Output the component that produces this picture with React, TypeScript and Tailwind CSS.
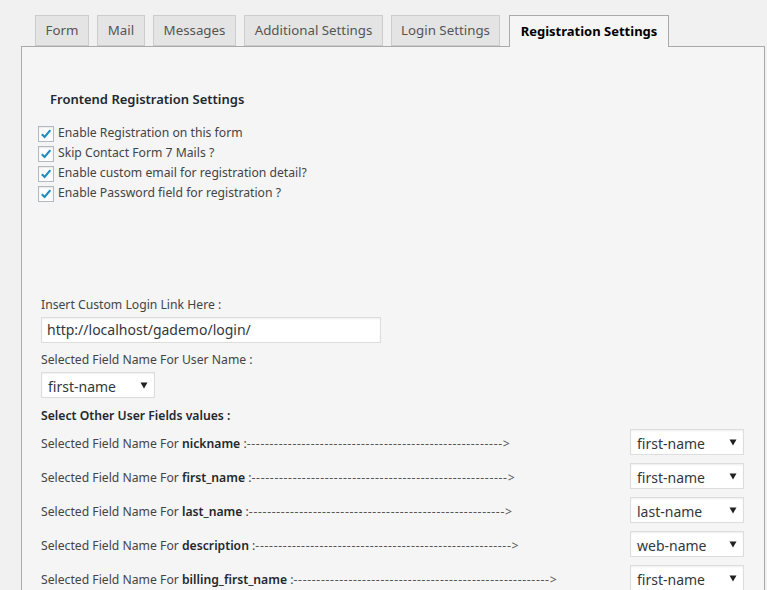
import React from 'react'

const tabs = [
  { label: 'Form', w: 'w-[54px]' },
  { label: 'Mail', w: 'w-[48px]' },
  { label: 'Messages', w: 'w-[83px]' },
  { label: 'Additional Settings', w: 'w-[139px]' },
  { label: 'Login Settings', w: 'w-[109px]' },
]

const checks = [
  'Enable Registration on this form',
  'Skip Contact Form 7 Mails ?',
  'Enable custom email for registration detail?',
  'Enable Password field for registration ?',
]

const rows = [
  { field: 'nickname', value: 'first-name' },
  { field: 'first_name', value: 'first-name' },
  { field: 'last_name', value: 'last-name' },
  { field: 'description', value: 'web-name' },
  { field: 'billing_first_name', value: 'first-name' },
]

const font = { fontFamily: '"Noto Sans", "Open Sans", sans-serif' }
const dashes = '-'.repeat(56)

function Check() {
  return (
    <span className="flex h-4 w-4 shrink-0 items-center justify-center border border-[#b4b9be] bg-white shadow-[inset_0_1px_2px_rgba(0,0,0,0.1)]">
      <svg viewBox="0 0 16 16" className="h-4 w-4">
        <path d="M3.2 8.2 L6.4 11.3 L13 3.6" fill="none" stroke="#1e8cbe" strokeWidth="2.4" />
      </svg>
    </span>
  )
}

function Select({ value }: { value: string }) {
  return (
    <div className="relative h-[26px] w-[114px] border border-[#ddd] bg-white shadow-[inset_0_1px_2px_rgba(0,0,0,0.07)]">
      <span className="absolute left-[6px] top-[3px] text-[14px] text-[#32373c]">{value}</span>
      <svg viewBox="0 0 8 8" className="absolute right-[6px] top-[8px] h-[8px] w-[8px]">
        <path d="M0.5 1.5 L7.5 1.5 L4 7.5 Z" fill="#222" />
      </svg>
    </div>
  )
}

export default function App() {
  return (
    <div className="min-h-[590px] w-[767px] overflow-hidden bg-[#f1f1f1] text-[#444]" style={font}>
      {/* Tabs */}
      <div className="flex gap-2 pl-[35px] pt-[15px]">
        {tabs.map((t) => (
          <div
            key={t.label}
            className={`flex h-[31px] items-center justify-center border border-[#ccc] bg-[#e4e4e4] text-[13.3px] text-[#555] ${t.w}`}
          >
            {t.label}
          </div>
        ))}
        <div className="relative z-10 -mb-px ml-px flex h-[32px] w-[160px] items-center justify-center border border-b-0 border-[#aaa] bg-[#f5f5f5] text-[13px] font-bold text-black">
          Registration Settings
        </div>
      </div>

      {/* Panel */}
      <div className="ml-[21px] mr-[2px] h-[560px] border border-b-0 border-[#aaa] bg-[#f5f5f5] pl-[19px] pt-[43px]">
        <h3 className="pl-[9px] text-[13px] font-semibold text-[#23282d]">Frontend Registration Settings</h3>

        <div className="mt-[14px] flex flex-col">
          {checks.map((c) => (
            <label key={c} className="-ml-[3px] flex h-[20px] items-center gap-[4px] text-[12.2px] text-[#444]">
              <Check />
              {c}
            </label>
          ))}
        </div>

        <div className="mt-[92px] text-[12.2px] text-[#444]">Insert Custom Login Link Here :</div>
        <div className="mt-[3px] flex h-[26px] w-[340px] items-center border border-[#ddd] bg-white pl-[5px] text-[14px] text-[#32373c] shadow-[inset_0_1px_2px_rgba(0,0,0,0.07)]">
          http://localhost/gademo/login/
        </div>

        <div className="mt-[8px] text-[12.2px] text-[#444]">Selected Field Name For User Name :</div>
        <div className="mt-[3px]">
          <Select value="first-name" />
        </div>

        <div className="mt-[9px] text-[12.2px] font-semibold text-[#23282d]">Select Other User Fields values :</div>

        <div className="mt-[4px] flex flex-col gap-[8px] pr-[20px]">
          {rows.map((r) => (
            <div key={r.field} className="flex items-center justify-between">
              <div className="whitespace-nowrap pt-[4px] text-[12.2px] text-[#444]">
                Selected Field Name For <span className="font-semibold text-[#23282d]">{r.field}</span> :
                <span className="tracking-[0.65px] text-[#555]">{dashes}</span>
                <span className="text-[#555]">&gt;</span>
              </div>
              <Select value={r.value} />
            </div>
          ))}
        </div>
      </div>
    </div>
  )
}
